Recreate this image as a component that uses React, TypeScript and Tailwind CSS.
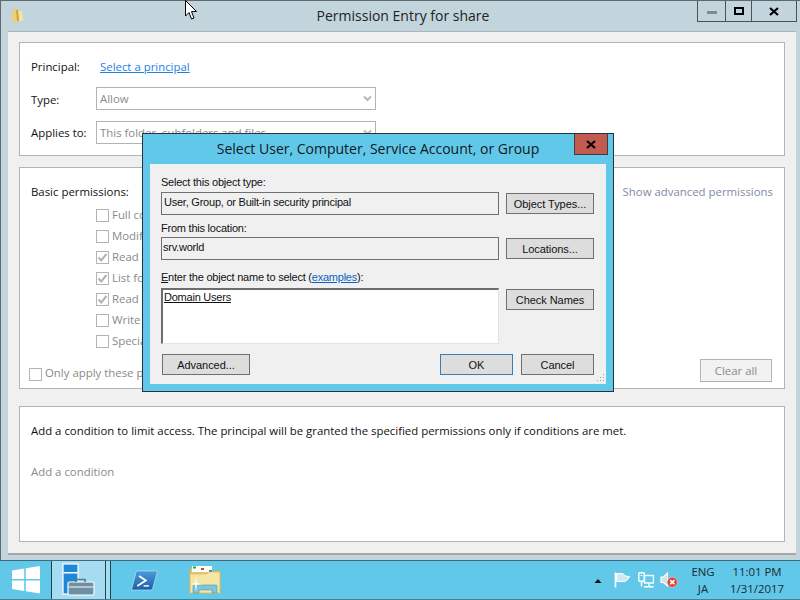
import React from "react";

const seg = "font-['Open_Sans','Noto_Sans',sans-serif]";
const lib = "font-['Liberation_Sans',Arial,sans-serif]";

function Check({ checked }: { checked?: boolean }) {
  return (
    <span className="w-[13px] h-[13px] border border-[#b4b4b4] bg-white flex items-center justify-center shrink-0">
      {checked && (
        <svg width="11" height="11" viewBox="0 0 11 11">
          <path d="M1.5 5.5 L4.2 8.5 L9.5 2" fill="none" stroke="#b2b2b2" strokeWidth="2" />
        </svg>
      )}
    </span>
  );
}

function Combo({ text }: { text: string }) {
  return (
    <div className="w-[280px] h-[23px] border border-[#b4b4b4] bg-white flex items-center justify-between pl-[3px] pr-[3px] text-[#8a8a8a]">
      <span>{text}</span>
      <svg width="9" height="7" viewBox="0 0 9 7">
        <path d="M1 1.5 L4.5 5 L8 1.5" fill="none" stroke="#b8b8b8" strokeWidth="2" />
      </svg>
    </div>
  );
}

function PermRow({ label, checked }: { label: string; checked?: boolean }) {
  return (
    <div className="h-[21px] flex items-center gap-[3px] text-[#8a8a8a]">
      <Check checked={checked} />
      <span className="mt-[-2px]">{label}</span>
    </div>
  );
}

function DlgButton({ children, focus, className = "" }: { children: React.ReactNode; focus?: boolean; className?: string }) {
  return (
    <div className={`h-[21px] border ${focus ? "border-[#3b7db3]" : "border-[#707070]"} bg-[#dddddd] flex items-center justify-center tracking-[-0.05px] text-[#111] ${className}`}>
      {children}
    </div>
  );
}

function Dialog() {
  return (
    <div className={`absolute left-[142px] top-[133px] w-[472px] h-[259px] border border-[#26343a] bg-[#62c8ea] flex flex-col ${lib}`}>
      <div className="h-[30px] shrink-0 relative flex items-center justify-center">
        <span className={`${seg} text-[14px] text-[#10181c] mt-[-1px]`}>Select User, Computer, Service Account, or Group</span>
        <div className="absolute right-[5px] top-0 w-[34px] h-[21px] bg-[#c25b50] border border-[#3c3f40] border-t-0 flex items-center justify-center">
          <svg width="10" height="9" viewBox="0 0 10 9">
            <path d="M1 1 L9 8 M9 1 L1 8" stroke="#000" strokeWidth="2.2" />
          </svg>
        </div>
      </div>
      <div className="mx-[7px] h-[220px] bg-[#f0f0f0] pl-[11px] pr-[12px] pt-[10px] text-[11px] tracking-[-0.23px] text-[#111] relative flex flex-col">
        <div className="leading-[16px] h-[18px]">Select this object type:</div>
        <div className="flex gap-[7px] items-center h-[23px]">
          <div className="w-[338px] h-[23px] border border-[#707070] flex items-center pl-[2px] pb-[2px]">User, Group, or Built-in security principal</div>
          <DlgButton className="w-[88px] pt-[2px]">Object Types...</DlgButton>
        </div>
        <div className="leading-[16px] h-[22px] pt-[5px]">From this location:</div>
        <div className="flex gap-[7px] items-center h-[23px]">
          <div className="w-[338px] h-[23px] border border-[#707070] flex items-center pl-[1px] pb-[2px]">srv.world</div>
          <DlgButton className="w-[88px] pt-[1px]">Locations...</DlgButton>
        </div>
        <div className="leading-[16px] h-[28px] pt-[9px]">
          <span className="underline">E</span>nter the object name to select (<span className="underline text-[#0a63c9]">examples</span>):
        </div>
        <div className="flex gap-[7px] items-start">
          <div className="w-[338px] h-[56px] bg-white border border-[#e3e3e3] border-t-[2px] border-l-[2px] border-t-[#6d6d6d] border-l-[#6d6d6d] pl-[1px] leading-[15px]">
            <span className="underline">Domain Users</span>
          </div>
          <DlgButton className="w-[88px] mt-[1px] pt-[1px]">Check Names</DlgButton>
        </div>
        <div className="flex mt-[10px] pl-[1px]">
          <DlgButton className="w-[88px] pt-[1px]">Advanced...</DlgButton>
          <DlgButton focus className="w-[73px] ml-[190px] pt-[1px]">OK</DlgButton>
          <DlgButton className="w-[73px] ml-[8px] pt-[1px]">Cancel</DlgButton>
        </div>
        <svg className="absolute right-[1px] bottom-[1px]" width="10" height="10" viewBox="0 0 10 10">
          <path d="M8 1h1v1H8zM5 4h1v1H5zM8 4h1v1H8zM2 7h1v1H2zM5 7h1v1H5zM8 7h1v1H8z" fill="#a0a0a0" />
        </svg>
      </div>
    </div>
  );
}

function StartIcon() {
  return (
    <svg width="28" height="28" viewBox="0 0 28 28">
      <path d="M0 4.5 L12.2 2.6 V13 H0 Z M13.8 2.3 L28 0 V13 H13.8 Z M0 14.6 H12.2 V25 L0 23 Z M13.8 14.6 H28 V27.5 L13.8 25.3 Z" fill="#fff" />
    </svg>
  );
}

function ServerManagerIcon() {
  return (
    <svg width="34" height="34" viewBox="0 0 34 34">
      <rect x="1" y="1" width="15" height="30" fill="#1e88d8" stroke="#fff" strokeWidth="1.2" />
      <rect x="1.5" y="9" width="14" height="1.5" fill="#fff" />
      <rect x="6" y="19" width="26" height="13" rx="1.5" fill="#6f8fa3" stroke="#fff" strokeWidth="1.2" />
      <path d="M14 19 V16.5 H23 V19" fill="none" stroke="#5d7688" strokeWidth="1.6" />
      <path d="M7 24 H31" stroke="#fff" strokeWidth="1" />
    </svg>
  );
}

function PowerShellIcon() {
  return (
    <svg width="27" height="23" viewBox="0 0 30 24">
      <defs>
        <linearGradient id="ps" x1="0" y1="0" x2="0" y2="1">
          <stop offset="0" stopColor="#4a9bdc" />
          <stop offset="1" stopColor="#1d5ea6" />
        </linearGradient>
      </defs>
      <path d="M7 1.5 H28 Q29.5 1.5 29 3 L24 21 Q23.5 22.5 22 22.5 H2 Q0.5 22.5 1 21 L5.5 3 Q6 1.5 7 1.5 Z" fill="url(#ps)" stroke="#d7edf6" strokeWidth="0.6" />
      <path d="M9 7 L16.5 12 L7 18" fill="none" stroke="#fff" strokeWidth="2" />
      <path d="M14 18 H20" stroke="#fff" strokeWidth="1.6" />
    </svg>
  );
}

function ExplorerIcon() {
  return (
    <svg width="32" height="30" viewBox="0 0 32 30">
      <path d="M1 3 H21 L23 6 H31 V28 H1 Z" fill="#e3c66e" stroke="#c9a94f" strokeWidth="0.8" />
      <rect x="3" y="1" width="20" height="6" fill="#fff" />
      <rect x="4" y="1.5" width="3" height="2" fill="#19b028" />
      <rect x="12" y="3" width="3" height="2" fill="#d8402c" />
      <rect x="20" y="5" width="3" height="2" fill="#2b86d8" />
      <path d="M1 9 H18 L19 7 H31 V28 H1 Z" fill="#f6e6a4" stroke="#d9bd63" strokeWidth="0.8" />
      <path d="M4 28 V21 Q4 20 5 20 H27 Q28 20 28 21 V28 H23 V25 H10 V28 Z" fill="#7dc6d8" stroke="#4a9fb8" strokeWidth="0.6" />
      <path d="M7 11 L8 18 L14 19 L8 20 L7 27 L6 20 L2 19 L6 18 Z" fill="#ffffff" opacity="0.85" />
    </svg>
  );
}

function FlagIcon() {
  return (
    <svg width="16" height="16" viewBox="0 0 16 16">
      <path d="M1.5 0.5 V15.5" stroke="#fff" strokeWidth="1.6" />
      <path d="M2.5 1.5 H9 Q10 4.5 15.5 4.5 Q13 10.5 8 9.5 H2.5 Z" fill="#cfeaf4" stroke="#fff" strokeWidth="1" />
    </svg>
  );
}

function NetIcon() {
  return (
    <svg width="16" height="16" viewBox="0 0 16 16">
      <rect x="0.8" y="0.8" width="5.5" height="8.5" rx="1" fill="#62c8ea" stroke="#fff" strokeWidth="1.4" />
      <path d="M2.5 3.5 H4.5" stroke="#fff" />
      <path d="M3.5 9 V14.5" stroke="#fff" strokeWidth="1.4" />
      <rect x="6.5" y="3.5" width="9" height="7.5" fill="none" stroke="#fff" strokeWidth="1.4" />
      <path d="M11 11 V14 M6 14.8 H15.5" stroke="#fff" strokeWidth="1.4" />
    </svg>
  );
}

function SoundIcon() {
  return (
    <svg width="18" height="16" viewBox="0 0 18 16">
      <path d="M1 5 H3.5 L7.5 1 V14 L3.5 10.5 H1 Z" fill="#cfe3ea" stroke="#fff" strokeWidth="1.2" />
      <circle cx="12.3" cy="10.2" r="5" fill="#e0403a" stroke="#f5c5c0" strokeWidth="0.6" />
      <path d="M10.2 8.1 L14.4 12.3 M14.4 8.1 L10.2 12.3" stroke="#fff" strokeWidth="1.6" />
    </svg>
  );
}

export default function App() {
  return (
    <div className={`w-[800px] h-[600px] relative overflow-hidden bg-[#c2d5dc] flex flex-col text-[11.4px] ${seg}`}>
      <div className="h-[560px] shrink-0 flex flex-col border-t border-l border-[#5f6a70] pl-[7px] pr-[4px] pb-[5px]">
        <div className="h-[30px] shrink-0 relative flex items-center justify-center text-[14px] text-[#222]">
          <svg className="absolute left-[3px] top-[7px]" width="13" height="15" viewBox="0 0 13 15">
            <path d="M1 1 H7 L9 13 L3 15 L1 13 Z" fill="#e9cf7d" />
            <path d="M7 3 H11 L12 13 H8 Z" fill="#f4e3a2" />
            <path d="M5 2 L7 2 L8 13 L6 13 Z" fill="#c9a643" />
          </svg>
          <span className="mt-[-2px] ml-[2px]">Permission Entry for share</span>
          <div className="absolute right-[-1px] top-0 w-[100px] h-[21px] border border-[#4a5358] border-t-0 flex">
            <div className="w-[28px] border-r border-[#4a5358] flex items-center justify-center pt-[3px]">
              <span className="w-[10px] h-[3px] bg-[#7d8a90]" />
            </div>
            <div className="w-[26px] border-r border-[#4a5358] flex items-center justify-center">
              <span className="w-[10px] h-[8px] border-2 border-black" />
            </div>
            <div className="flex-1 flex items-center justify-center">
              <svg width="10" height="9" viewBox="0 0 10 9">
                <path d="M1 1 L9 8 M9 1 L1 8" stroke="#000" strokeWidth="2.2" />
              </svg>
            </div>
          </div>
        </div>
        <div className="flex-1 bg-[#f0f0f0] border-t border-[#a9b5ba] border-b-[2px] border-b-[#a6a6a6] px-[11px] pt-[10px] flex flex-col text-[#111]">
          <div className="h-[114px] shrink-0 bg-white border border-[#b4b4b4] pl-[11px] flex flex-col">
            <div className="h-[44px] flex items-center pt-[4px]">
              <span className="w-[69px] shrink-0">Principal:</span>
              <span className="text-[#1d80e6] underline">Select a principal</span>
            </div>
            <div className="flex items-center h-[23px]">
              <span className="w-[65px] shrink-0 pt-[2px]">Type:</span>
              <Combo text="Allow" />
            </div>
            <div className="flex items-center h-[23px] mt-[11px]">
              <span className="w-[65px] shrink-0 pt-[1px]">Applies to:</span>
              <Combo text="This folder, subfolders and files" />
            </div>
          </div>
          <div className="h-[222px] shrink-0 mt-[11px] bg-white border border-[#b4b4b4] flex flex-col">
            <div className="flex justify-between pl-[11px] pr-[11px] pt-[15px] h-[37px]">
              <span>Basic permissions:</span>
              <span className="text-[#7f8aa5]">Show advanced permissions</span>
            </div>
            <div className="pl-[76px] flex flex-col">
              <PermRow label="Full control" />
              <PermRow label="Modify" />
              <PermRow label="Read &amp; execute" checked />
              <PermRow label="List folder contents" checked />
              <PermRow label="Read" checked />
              <PermRow label="Write" />
              <PermRow label="Special permissions" />
            </div>
            <div className="flex items-end justify-between pl-[9px] pr-[12px] mt-[7px]">
              <div className="flex items-center gap-[3px] text-[#8a8a8a] h-[16px]">
                <Check />
                <span className="mt-[-2px]">Only apply these permissions to objects and/or containers</span>
              </div>
              <div className="w-[72px] h-[23px] border border-[#b4b4b4] bg-[#f2f2f2] flex items-center justify-center text-[#8a8a8a] shrink-0">
                Clear all
              </div>
            </div>
          </div>
          <div className="h-[136px] shrink-0 mt-[17px] bg-white border border-[#b4b4b4] pl-[11px] flex flex-col">
            <div className="mt-[15px]">Add a condition to limit access. The principal will be granted the specified permissions only if conditions are met.</div>
            <div className="mt-[24px] text-[#8a8a8a]">Add a condition</div>
          </div>
        </div>
      </div>

      <div className="h-[40px] shrink-0 bg-[#62c8ea] border-t border-[#3d6b7e] border-b border-b-[#4d7f93] flex items-center">
        <div className="w-[51px] h-full flex items-center justify-center">
          <StartIcon />
        </div>
        <div className="w-[60px] h-full bg-[#a5dcf2] border-x border-[#1d4454] flex items-center">
          <div className="w-[54px] h-full border-r border-[#1d4454] flex items-center justify-center">
            <ServerManagerIcon />
          </div>
        </div>
        <div className="w-[62px] ml-[2px] flex items-center justify-center">
          <PowerShellIcon />
        </div>
        <div className="w-[60px] flex items-center justify-center">
          <ExplorerIcon />
        </div>
        <div className="flex-1 flex items-center justify-end h-full">
          <svg className="mr-[12px]" width="8" height="5" viewBox="0 0 8 5">
            <path d="M0.5 5 L4 1 L7.5 5 Z" fill="#111" />
          </svg>
          <span className="mr-[8px] flex"><FlagIcon /></span>
          <span className="mr-[6px] flex"><NetIcon /></span>
          <span className="flex"><SoundIcon /></span>
          <div className="w-[42px] ml-[4px] flex flex-col items-center leading-[17px] text-[#1a2a30]">
            <span>ENG</span>
            <span>JA</span>
          </div>
          <div className="w-[66px] mr-[10px] flex flex-col items-center leading-[17px] text-[#1a2a30]">
            <span>11:01 PM</span>
            <span>1/31/2017</span>
          </div>
        </div>
      </div>

      <Dialog />

      <svg className="absolute left-[185px] top-0" width="13" height="21" viewBox="0 0 13 21">
        <path d="M0.5 0.5 V16 L4 12.5 L6.5 19 L9 18 L6.5 11.5 H11.5 Z" fill="#fff" stroke="#000" strokeWidth="1" />
      </svg>
    </div>
  );
}
